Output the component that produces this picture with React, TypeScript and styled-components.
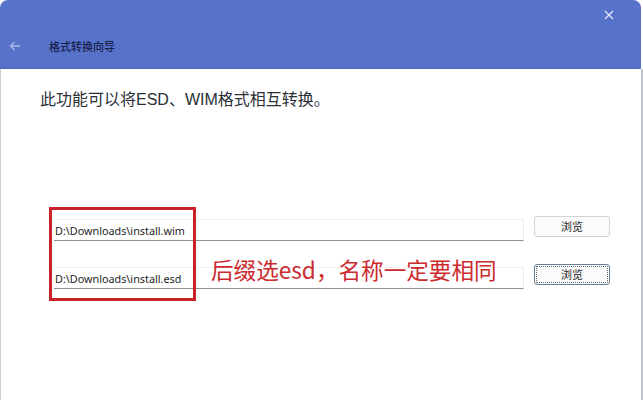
import styled, { createGlobalStyle } from 'styled-components';

const GlobalStyle = createGlobalStyle`
  html, body {
    margin: 0;
    padding: 0;
    background: #fff;
  }
  body {
    font-family: "Noto Sans CJK SC", "Liberation Sans", sans-serif;
  }
`;

const FONT = `"Liberation Sans", "Noto Sans CJK SC", sans-serif`;

function BackArrow() {
  return (
    <svg width="12" height="10" viewBox="0 0 12 10" fill="none">
      <path d="M11 5H1.5M5.5 1L1.5 5l4 4" stroke="#a9b8ea" strokeWidth="1.3" />
    </svg>
  );
}

function CloseIcon() {
  return (
    <svg width="10" height="10" viewBox="0 0 10 10" fill="none">
      <path d="M1 1l8 8M9 1L1 9" stroke="#e4e9fb" strokeWidth="1.2" />
    </svg>
  );
}

export default function App() {
  return (
    <>
      <GlobalStyle />
      <Window>
        <TitleBar>
          <CloseButton>
            <CloseIcon />
          </CloseButton>
          <TitleRow>
            <BackButton>
              <BackArrow />
            </BackButton>
            <Title>格式转换向导</Title>
          </TitleRow>
        </TitleBar>
        <Body>
          <Description>此功能可以将ESD、WIM格式相互转换。</Description>
          <Fields>
            <FieldRow>
              <PathInput>D:\Downloads\install.wim</PathInput>
              <BrowseButton>浏览</BrowseButton>
            </FieldRow>
            <FieldRow>
              <PathInput>D:\Downloads\install.esd</PathInput>
              <BrowseButton focused>浏览</BrowseButton>
            </FieldRow>
            <RedBox />
            <Note>后缀选esd，名称一定要相同</Note>
          </Fields>
        </Body>
      </Window>
    </>
  );
}

const Window = styled.div`
  width: 643px;
  height: 400px;
  display: flex;
  flex-direction: column;
  box-sizing: border-box;
  background: #fff;
  overflow: hidden;
`;

const TitleBar = styled.div`
  height: 69px;
  flex-shrink: 0;
  width: 641px;
  box-sizing: border-box;
  background: #5773c9;
  border-radius: 8px 8px 0 0;
  border-bottom: 1px solid #4f67b4;
  position: relative;
  display: flex;
  flex-direction: column;
  justify-content: flex-end;
  padding-bottom: 14px;
`;

const CloseButton = styled.div`
  position: absolute;
  top: 10px;
  right: 27px;
  width: 10px;
  height: 10px;
  display: flex;
`;

const TitleRow = styled.div`
  display: flex;
  align-items: center;
  height: 16px;
`;

const BackButton = styled.div`
  width: 49px;
  padding-left: 9px;
  box-sizing: border-box;
  display: flex;
  align-items: center;
`;

const Title = styled.div`
  font-family: "Noto Sans CJK SC", sans-serif;
  font-size: 11px;
  font-weight: 500;
  color: #18214d;
`;

const Body = styled.div`
  flex: 1;
  width: 643px;
  box-sizing: border-box;
  border-left: 1px solid #c9d2dd;
  border-right: 2px solid #bfc6ce;
  padding: 20px 0 0 39px;
`;

const Description = styled.div`
  font-family: ${FONT};
  font-size: 16px;
  color: #2b2f36;
  line-height: 22px;
`;

const Fields = styled.div`
  position: relative;
  margin-top: 108px;
  margin-left: 14px;
  display: flex;
  flex-direction: column;
  gap: 26px;
`;

const FieldRow = styled.div`
  display: flex;
  align-items: center;
  gap: 10px;
`;

const PathInput = styled.div`
  width: 470px;
  height: 22px;
  box-sizing: border-box;
  border-top: 1px solid #f0f0f0;
  border-right: 1px solid #ebebeb;
  border-bottom: 1px solid #8c8c8c;
  padding: 0 1px;
  display: flex;
  align-items: center;
  font-family: "Noto Sans", "Liberation Sans", sans-serif;
  font-size: 10.8px;
  color: #1e1e1e;
  background: #fff;
`;

const BrowseButton = styled.div<{ focused?: boolean }>`
  width: 76px;
  height: 21px;
  box-sizing: border-box;
  border-radius: 3px;
  display: flex;
  align-items: center;
  justify-content: center;
  font-family: "Noto Sans CJK SC", sans-serif;
  font-size: 11px;
  color: #222;
  background: #fbfbfb;
  border: 1px solid ${(p) => (p.focused ? '#6a7f94' : '#d3d3d3')};
  outline: ${(p) => (p.focused ? '1px dotted #5b6b7b' : 'none')};
  outline-offset: -3px;
  margin-top: -8px;
`;

const RedBox = styled.div`
  position: absolute;
  left: -5px;
  top: -12px;
  width: 147px;
  height: 94px;
  box-sizing: border-box;
  border: 3px solid #c9222b;
  pointer-events: none;
`;

const Note = styled.div`
  position: absolute;
  left: 157px;
  top: 36px;
  font-family: "Noto Sans CJK SC", sans-serif;
  font-size: 22.6px;
  line-height: 30px;
  color: #cb2a2f;
  white-space: nowrap;
`;
